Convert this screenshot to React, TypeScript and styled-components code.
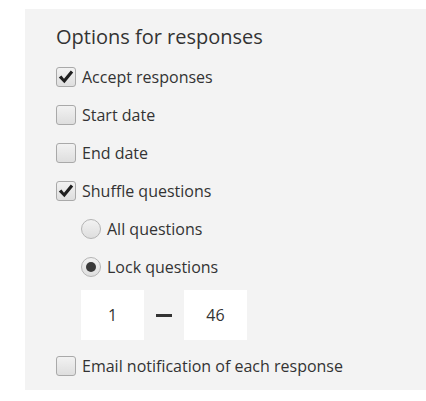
import React, { useState } from "react";
import styled, { createGlobalStyle } from "styled-components";

const GlobalStyle = createGlobalStyle`
  html, body {
    margin: 0;
    padding: 0;
    background: #ffffff;
  }
  body {
    font-family: "Open Sans", "Noto Sans", sans-serif;
    color: #333333;
  }
`;

const Page = styled.div`
  padding: 9px 0 0 25px;
`;

const Panel = styled.section`
  background: #f3f3f3;
  padding: 14px 0 5px 31px;
`;

const Title = styled.h2`
  margin: 0 0 7px;
  font-size: 20px;
  font-weight: 400;
  line-height: 28px;
  color: #333333;
`;

const Row = styled.label<{ indent?: boolean }>`
  display: flex;
  align-items: center;
  gap: 6px;
  height: 38px;
  padding-left: ${(p) => (p.indent ? "25px" : "0")};
  font-size: 16px;
  color: #333333;
  cursor: pointer;
`;

const Box = styled.span`
  width: 20px;
  height: 20px;
  box-sizing: border-box;
  border: 1px solid #a9a9a9;
  border-radius: 3px;
  background: linear-gradient(#f2f2f2, #dedede);
  display: flex;
  align-items: center;
  justify-content: center;
  flex: 0 0 auto;
`;

const Radio = styled.span`
  width: 20px;
  height: 20px;
  box-sizing: border-box;
  border: 1px solid #b4b4b4;
  border-radius: 50%;
  background: linear-gradient(#f2f2f2, #dedede);
  display: flex;
  align-items: center;
  justify-content: center;
  flex: 0 0 auto;
`;

const Dot = styled.span`
  width: 10px;
  height: 10px;
  border-radius: 50%;
  background: #3a3a3a;
`;

const RangeRow = styled.div`
  display: flex;
  align-items: center;
  padding: 4px 0 7px 25px;
  gap: 12px;
`;

const NumberField = styled.div`
  width: 63px;
  height: 50px;
  background: #ffffff;
  display: flex;
  align-items: center;
  justify-content: center;
  font-size: 16px;
  color: #333333;
`;

const Dash = styled.span`
  width: 16px;
  height: 3px;
  background: #333333;
`;

const Check = () => (
  <svg width="18" height="18" viewBox="0 0 18 18">
    <path d="M1.8 9.6 L4.4 7.6 L7 10.8 L13.8 2.6 L16.2 4.6 L7.4 15.2 Z" fill="#1f1f1f" />
  </svg>
);

const CheckRow: React.FC<{ checked: boolean; label: string; onToggle: () => void }> = ({
  checked,
  label,
  onToggle
}) => (
  <Row onClick={onToggle}>
    <Box>{checked && <Check />}</Box>
    {label}
  </Row>
);

const RadioRow: React.FC<{ selected: boolean; label: string; onSelect: () => void }> = ({
  selected,
  label,
  onSelect
}) => (
  <Row indent onClick={onSelect}>
    <Radio>{selected && <Dot />}</Radio>
    {label}
  </Row>
);

export default function App() {
  const [opts, setOpts] = useState({
    accept: true,
    start: false,
    end: false,
    shuffle: true,
    email: false
  });
  const [mode, setMode] = useState<"all" | "lock">("lock");
  const toggle = (k: keyof typeof opts) => () => setOpts((o) => ({ ...o, [k]: !o[k] }));

  return (
    <Page>
      <GlobalStyle />
      <Panel>
        <Title>Options for responses</Title>
        <CheckRow checked={opts.accept} label="Accept responses" onToggle={toggle("accept")} />
        <CheckRow checked={opts.start} label="Start date" onToggle={toggle("start")} />
        <CheckRow checked={opts.end} label="End date" onToggle={toggle("end")} />
        <CheckRow checked={opts.shuffle} label="Shuffle questions" onToggle={toggle("shuffle")} />
        <RadioRow selected={mode === "all"} label="All questions" onSelect={() => setMode("all")} />
        <RadioRow selected={mode === "lock"} label="Lock questions" onSelect={() => setMode("lock")} />
        <RangeRow>
          <NumberField>1</NumberField>
          <Dash />
          <NumberField>46</NumberField>
        </RangeRow>
        <CheckRow
          checked={opts.email}
          label="Email notification of each response"
          onToggle={toggle("email")}
        />
      </Panel>
    </Page>
  );
}
